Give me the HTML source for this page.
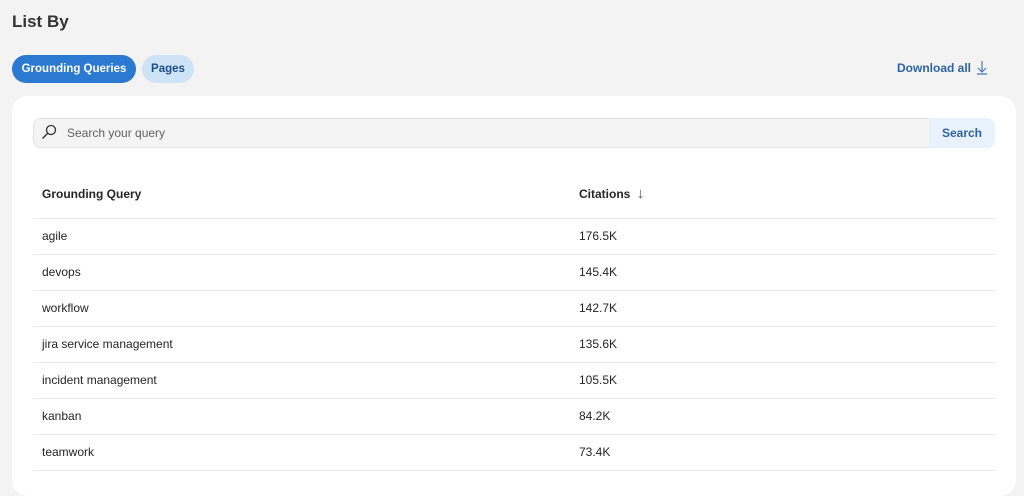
<!DOCTYPE html><html><head><style>
body{margin:0;width:1024px;height:474px;overflow:hidden;background:#f3f3f3;font-family:"Liberation Sans",sans-serif;color:#242424;position:relative}
.a{position:absolute}
h1{position:absolute;left:12px;top:12px;margin:0;font-size:17px;font-weight:bold;color:#333}
.pill{position:absolute;top:55px;height:28px;border-radius:14px;font-size:11.5px;font-weight:bold;line-height:28px;text-align:center}
.card{position:absolute;left:12px;top:96px;width:1004px;height:400px;background:#fff;border-radius:16px}
.row{position:absolute;left:33px;width:963px;height:36px;border-bottom:1px solid #ebebeb;font-size:12px;line-height:36px}
.row span{position:absolute;left:9px}.row b{position:absolute;left:546px;font-weight:normal}
</style></head><body>
<h1>List By</h1>
<div class="pill" style="left:12px;width:124px;background:#2b79d1;color:#fff">Grounding Queries</div>
<div class="pill" style="left:142px;width:52px;background:#cfe3f7;color:#1c4f8a">Pages</div>
<div class="a" style="left:897px;top:61px;font-size:12px;font-weight:bold;color:#2f62a3">Download all</div>
<svg class="a" style="left:976px;top:60px" width="12" height="15"><path d="M6 1v11M2 8l4 4 4-4M1 14h10" stroke="#4a78b5" fill="none" stroke-width="1.2"/></svg>
<div class="card"></div>
<div class="a" style="left:33px;top:118px;width:895px;height:28px;background:#f4f4f4;border:1px solid #e2e2e2;border-radius:8px 0 0 8px"></div>
<svg class="a" style="left:41px;top:124px" width="16" height="16"><circle cx="10" cy="6" r="4.5" stroke="#333" fill="none" stroke-width="1.3"/><path d="M7 9l-5.5 5.5" stroke="#333" stroke-width="1.4"/></svg>
<div class="a" style="left:67px;top:126px;font-size:12px;color:#616161">Search your query</div>
<div class="a" style="left:929px;top:118px;width:66px;height:30px;background:#e8f2fd;border-radius:0 8px 8px 0;font-size:12px;font-weight:bold;color:#2f62a3;line-height:30px;text-align:center">Search</div>
<div class="row" style="top:176px;height:42px;line-height:36px;font-weight:bold"><span>Grounding Query</span><b style="font-weight:bold">Citations <span style="position:static;font-weight:normal;font-size:15px;color:#555;margin-left:3px">↓</span></b></div>
<div class="row" style="top:218px"><span>agile</span><b>176.5K</b></div>
<div class="row" style="top:254px"><span>devops</span><b>145.4K</b></div>
<div class="row" style="top:290px"><span>workflow</span><b>142.7K</b></div>
<div class="row" style="top:326px"><span>jira service management</span><b>135.6K</b></div>
<div class="row" style="top:362px"><span>incident management</span><b>105.5K</b></div>
<div class="row" style="top:398px"><span>kanban</span><b>84.2K</b></div>
<div class="row" style="top:434px"><span>teamwork</span><b>73.4K</b></div>
</body></html>
